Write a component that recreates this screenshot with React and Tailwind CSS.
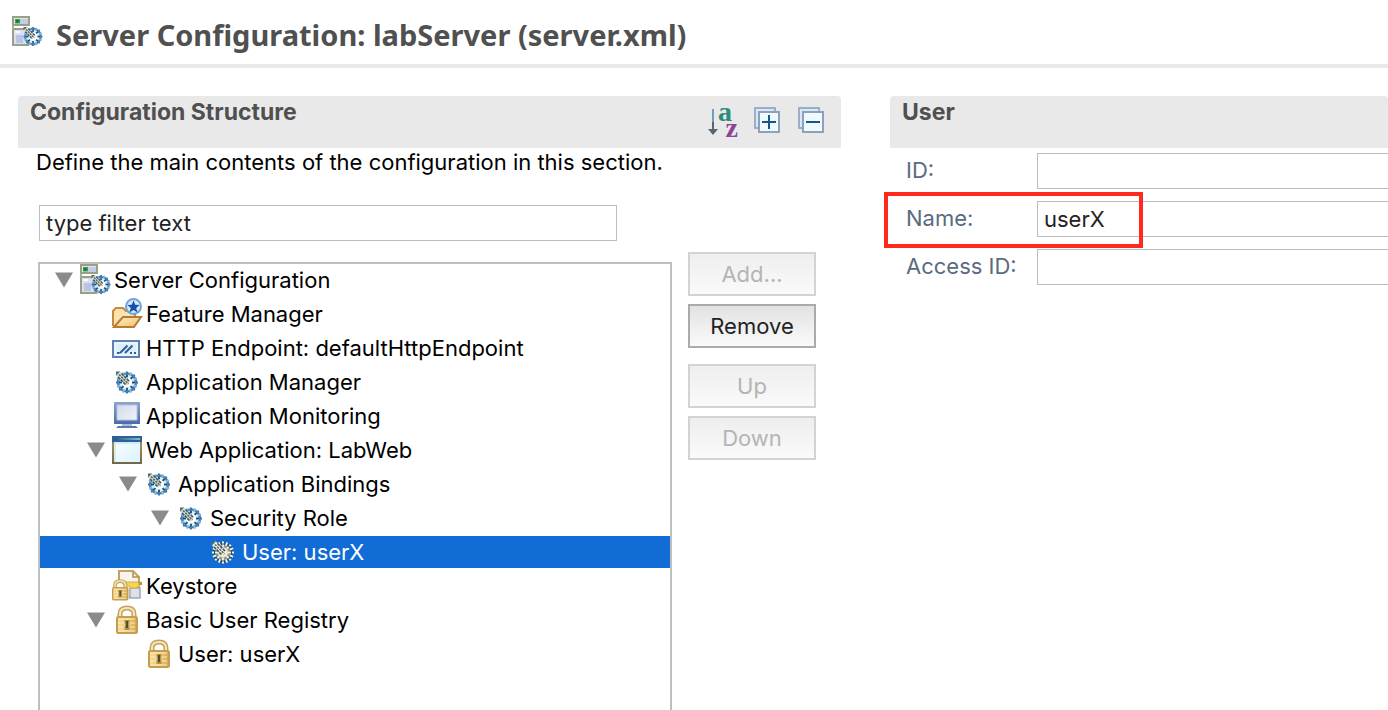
import React from "react";

const SPOKES = [0, 45, 90, 135, 180, 225, 270, 315];

function Gear({ cx, cy, r, light = false }) {
  return (
    <g transform={`translate(${cx} ${cy}) scale(${r / 11})`}>
      <circle r="9.500" fill={light ? "#8d99a0" : "#d9edf6"} />
      <circle
        r="9"
        fill="none"
        stroke={light ? "#2b4f73" : "#4a85b8"}
        strokeWidth="2.600"
      />
      {SPOKES.map((a) => (
        <g key={a} transform={`rotate(${a + 22.5})`}>
          <path d="M0 -11v3.500" stroke={light ? "#fbf8dc" : "#8fbbd9"} strokeWidth="1.800" />
        </g>
      ))}
      {SPOKES.map((a) => (
        <g key={a} transform={`rotate(${a})`}>
          <path d="M0 -11v2" stroke={light ? "#fbf8dc" : "#3f78ad"} strokeWidth="2" />
          <path d="M0 -8v3" stroke={light ? "#f3efd2" : "#1b4870"} strokeWidth="1.800" />
        </g>
      ))}
      <circle r="5" fill={light ? "#efecd4" : "#fbfdfb"} />
      <path d="M-9.500 -9.500L1 1" stroke={light ? "#f6f2d6" : "#d3dac6"} strokeWidth="5.500" />
      <path d="M-9 -5.500L-1 2.500M-5.500 -9L2.500 -1" stroke="#35567a" strokeWidth="1.600" strokeDasharray="3 .8" />
      <path d="M-8 -8L1.500 1.500" stroke="#5f6a58" strokeWidth="1.600" strokeDasharray="2.200 1" />
      <path d="M-11 -11h4l-4 4z" fill="#4f6a80" />
    </g>
  );
}

function Icon({ children, viewBox = "0 0 32 32" }) {
  return (
    <svg viewBox={viewBox} className="h-8 w-8 shrink-0" fill="none" aria-hidden="true">
      {children}
    </svg>
  );
}

function ServerIcon() {
  return (
    <Icon viewBox="1 0 32 32">
      <rect x="2" y="1" width="16" height="8" fill="#e2e5f3" stroke="#9aa084" strokeWidth="2" />
      <path d="M9 3h8v5H9z" fill="#c4cbe5" />
      <path d="M4 3h5v4.500H4z" fill="#35a24c" />
      <path d="M5 4h2.500v2.500H5z" fill="#0d7d2b" />
      <rect x="2" y="13" width="15" height="16" fill="#dadff3" stroke="#9aa084" strokeWidth="2" />
      <path d="M1 9.500h2v4H1z" fill="#a9ae98" />
      <path d="M4 15h5v2H4z" fill="#f8f9ff" />
      <path d="M5 19h7v8H5z" fill="#bac3e3" />
      <Gear cx={22} cy={20.500} r={9.500} />
    </Icon>
  );
}

function GearIcon({ light }) {
  return (
    <Icon>
      <Gear cx={15} cy={16.500} r={11} light={light} />
    </Icon>
  );
}

function FeatureIcon() {
  return (
    <Icon>
      <defs>
        <linearGradient id="folder" x1="0" y1="0" x2="1" y2="1">
          <stop offset="0" stopColor="#fff3cf" />
          <stop offset="1" stopColor="#f2bd63" />
        </linearGradient>
      </defs>
      <path d="M1 28V13l3-3h7l3 3h9v8" fill="#fbe3b0" stroke="#c78a3c" strokeWidth="2" />
      <path d="M2 29l9-10h18l-7 10z" fill="url(#folder)" stroke="#b87a35" strokeWidth="2" />
      <circle cx="21.500" cy="8.500" r="7.500" fill="#d6ebfa" stroke="#6fa5d8" strokeWidth="2" />
      <path d="M21.500 2.500l1.700 4.300 4.500.2-3.500 2.900 1.300 4.600-4-2.600-4 2.600 1.300-4.600-3.500-2.900 4.500-.2z" fill="#154fae" />
    </Icon>
  );
}

function EndpointIcon() {
  return (
    <Icon>
      <rect x="1" y="9" width="26" height="16" fill="#dcf0fb" stroke="#5e80b5" strokeWidth="2" />
      <path d="M3 11h22v12H3z" stroke="#f3fbff" strokeWidth="1" />
      <path d="M5 21h2.500M8 21l7.500-7.500M13 21l7.500-7.500" stroke="#335f94" strokeWidth="2" />
      <path d="M18 20h2v2h-2zM22 20h2v2h-2z" fill="#335f94" />
    </Icon>
  );
}

function MonitorIcon() {
  return (
    <Icon>
      <defs>
        <linearGradient id="screen" x1="0" y1="0" x2="1" y2="1">
          <stop offset="0" stopColor="#d3dae9" />
          <stop offset="1" stopColor="#f1f3f8" />
        </linearGradient>
        <linearGradient id="bezel" x1="0" y1="0" x2="0" y2="1">
          <stop offset="0" stopColor="#8da3cf" />
          <stop offset="1" stopColor="#4a6bab" />
        </linearGradient>
      </defs>
      <path d="M2 2h26v22H2z" fill="url(#bezel)" />
      <path d="M5 5h20v15H5z" fill="url(#screen)" stroke="#b8c5df" />
      <path d="M10 24h10v2H10z" fill="#a9b9d8" />
      <path d="M6 26h18l2 2H4z" fill="#5a78b2" />
    </Icon>
  );
}

function WindowIcon() {
  return (
    <Icon>
      <defs>
        <linearGradient id="frame" x1="0" y1="0" x2="0" y2="1">
          <stop offset="0" stopColor="#316699" />
          <stop offset="0.3" stopColor="#a58e55" />
          <stop offset="1" stopColor="#75674a" />
        </linearGradient>
        <linearGradient id="pane" x1="0" y1="0" x2="1" y2="1">
          <stop offset="0" stopColor="#ffffff" />
          <stop offset="1" stopColor="#d7f2fd" />
        </linearGradient>
        <linearGradient id="bar">
          <stop offset="0" stopColor="#25588b" />
          <stop offset="1" stopColor="#88b6db" />
        </linearGradient>
      </defs>
      <rect x="1" y="3" width="28" height="26" fill="url(#pane)" stroke="url(#frame)" strokeWidth="2" />
      <path d="M0 2h30v6H0z" fill="#2d6295" />
      <path d="M2 4h26v2H2z" fill="url(#bar)" />
      <path d="M3 28V9h24" stroke="#cceefa" strokeWidth="2" />
    </Icon>
  );
}

function LockShape() {
  return (
    <g>
      <path d="M8 15V10q0-6 7-6t7 6v5" stroke="#c6a25c" strokeWidth="5" />
      <path d="M8 15V10q0-6 7-6t7 6v5" stroke="#f5e6b4" strokeWidth="2" />
      <rect x="5" y="13" width="20" height="16" rx="1.500" fill="url(#brass)" stroke="#c79d4c" strokeWidth="2" />
      <path d="M6 15h17M6 19h17M6 23h17M6 27h17" stroke="#f9edc0" strokeWidth="1" />
      <path d="M12.500 16h5v3l-1 2 1 1v4h-5v-4l1-1-1-2z" fill="#b08f4c" />
      <path d="M14 17h2v7h-2z" fill="#5b4a2a" />
    </g>
  );
}

function Brass() {
  return (
    <defs>
      <linearGradient id="brass">
        <stop offset="0" stopColor="#f3dc97" />
        <stop offset="0.5" stopColor="#ecce80" />
        <stop offset="1" stopColor="#d3a750" />
      </linearGradient>
    </defs>
  );
}

function LockIcon() {
  return (
    <Icon>
      <Brass />
      <LockShape />
    </Icon>
  );
}

function KeystoreIcon() {
  return (
    <Icon>
      <Brass />
      <path d="M7 12V1h14l6 6v20H17" fill="#f6f4f0" stroke="#c6a260" strokeWidth="2" />
      <path d="M21 2v5h6" stroke="#b58d47" strokeWidth="1.500" />
      <path d="M18 18h10v10H18z" fill="#dce0e9" stroke="#a0a8b6" strokeWidth="1.500" />
      <path d="M12 12h17l-2 4-3 2h-5l-2-2h-5z" fill="#f6d54c" stroke="#d8b045" strokeWidth="1" />
      <path d="M26 12h4v3h-3z" fill="#c39339" />
      <g transform="translate(-3 8) scale(.75)">
        <LockShape />
      </g>
    </Icon>
  );
}

const NODES = [
  { level: 0, open: true, icon: <ServerIcon />, label: "Server Configuration" },
  { level: 1, icon: <FeatureIcon />, label: "Feature Manager" },
  { level: 1, icon: <EndpointIcon />, label: "HTTP Endpoint: defaultHttpEndpoint" },
  { level: 1, icon: <GearIcon />, label: "Application Manager" },
  { level: 1, icon: <MonitorIcon />, label: "Application Monitoring" },
  { level: 1, open: true, icon: <WindowIcon />, label: "Web Application: LabWeb" },
  { level: 2, open: true, icon: <GearIcon />, label: "Application Bindings" },
  { level: 3, open: true, icon: <GearIcon />, label: "Security Role" },
  { level: 4, selected: true, icon: <GearIcon light />, label: "User: userX" },
  { level: 1, icon: <KeystoreIcon />, label: "Keystore" },
  { level: 1, open: true, icon: <LockIcon />, label: "Basic User Registry" },
  { level: 2, icon: <LockIcon />, label: "User: userX" },
];

const INDENT = ["pl-[15px]", "pl-[47px]", "pl-[79px]", "pl-[111px]", "pl-[143px]"];

function TreeRow({ level, open, selected, icon, label }) {
  return (
    <li
      role="treeitem"
      aria-level={level + 1}
      aria-expanded={open}
      aria-selected={Boolean(selected)}
      className={`flex h-8 shrink-0 items-center whitespace-nowrap ${INDENT[level]} ${selected ? "bg-[#116cd6] text-white" : ""}`}
    >
      <span className="mr-[7px] flex w-[18px] shrink-0">
        {open && (
          <svg viewBox="0 0 18 15" className="h-4 w-[18px]" aria-hidden="true">
            <path d="M0 0h18L9 15z" fill="#8b8b8b" />
          </svg>
        )}
      </span>
      {icon}
      <span className="ml-0.5">{label}</span>
    </li>
  );
}

function ActionButton({ children, disabled }) {
  return (
    <button
      type="button"
      disabled={disabled}
      className={`h-11 w-full border-2 bg-linear-to-b ${
        disabled
          ? "border-[#d3d3d3] from-[#eeeeee] to-[#fafafa] text-[#b4b4b4]"
          : "border-[#aaaaaa] from-[#e2e2e2] to-[#fafafa] text-[#222]"
      }`}
    >
      {children}
    </button>
  );
}

function SectionHeader({ title, children }) {
  return (
    <div className="flex h-[52px] items-start justify-between rounded-t bg-[#e9e9e9] pr-[17px] pl-3">
      <h2 className="pt-0.5 text-[23px] leading-7 font-bold whitespace-nowrap text-[#505050]">{title}</h2>
      {children}
    </div>
  );
}

function StackedSquares({ plus }) {
  return (
    <svg viewBox="0 0 26 26" className="h-[26px] w-[26px]" fill="none" aria-hidden="true">
      <rect x="1" y="1" width="20" height="20" fill="#d4ebf7" stroke="#9dadc4" strokeWidth="2" />
      <rect x="5" y="5" width="20" height="20" fill="#effaff" stroke="#8fa0bc" strokeWidth="2" />
      <path d={plus ? "M8 15h14M15 8v14" : "M8 15h14"} stroke="#185486" strokeWidth="2" />
    </svg>
  );
}

function Field({ id, label, value, highlighted }) {
  return (
    <div className="relative flex h-9 items-center">
      <label htmlFor={id} className="w-[131px] shrink-0 pb-0.5 text-[#5a6b80]">
        {label}
      </label>
      <input
        id={id}
        defaultValue={value}
        className="h-9 w-full min-w-0 border border-r-0 border-[#bdbdbd] bg-white px-1.5 text-[#222] outline-none"
      />
      {highlighted && (
        <div className="pointer-events-none absolute -top-[9px] -left-[22px] h-14 w-[259px] border-4 border-[#ff291c]" />
      )}
    </div>
  );
}

export default function App() {
  return (
    <div className="flex h-screen flex-col overflow-hidden bg-white font-['Inter','Liberation_Sans',sans-serif] text-[22px] leading-7 text-black">
      <header className="flex h-[68px] shrink-0 items-center gap-3 border-b-4 border-[#e9e9e9] pl-3">
        <ServerIcon />
        <h1 className="pt-1.5 font-['Noto_Sans','Open_Sans',sans-serif] text-[29px] leading-9 font-bold whitespace-nowrap text-[#505050]">
          Server Configuration: labServer (server.xml)
        </h1>
      </header>

      <main className="grid min-h-0 flex-1 grid-cols-[823fr_498fr] gap-x-[49px] pt-7 pl-[18px]">
        <section className="flex min-h-0 min-w-0 flex-col">
          <SectionHeader title="Configuration Structure">
            <div className="flex items-center gap-4 pt-2">
              <button
                type="button"
                aria-label="Sort alphabetically"
                className="flex h-8 w-[30px] font-['Liberation_Serif',serif] text-[28px] leading-4 font-bold"
              >
                <svg viewBox="0 0 10 32" className="h-8 w-2.5 shrink-0" fill="none" aria-hidden="true">
                  <path d="M5 5v13" stroke="#6f9dc4" strokeWidth="2" />
                  <path d="M5 18v8" stroke="#596470" strokeWidth="2" />
                  <path d="M0 25h10l-5 6z" fill="#596470" />
                </svg>
                <span className="flex w-5 flex-col">
                  <span className="self-start text-[#2f8a7d]">a</span>
                  <span className="self-end text-[#8e4394]">z</span>
                </span>
              </button>
              <div className="flex gap-[18px]">
                <button type="button" aria-label="Expand all">
                  <StackedSquares plus />
                </button>
                <button type="button" aria-label="Collapse all">
                  <StackedSquares />
                </button>
              </div>
            </div>
          </SectionHeader>

          <p className="pl-[18px] whitespace-nowrap">
            Define the main contents of the configuration in this section.
          </p>

          <div className="flex min-h-0 flex-1 gap-4 pt-[29px] pr-[25px] pl-5">
            <div className="flex min-w-0 flex-1 flex-col">
              <input
                aria-label="Filter"
                defaultValue="type filter text"
                className="mr-[55px] ml-px h-9 shrink-0 border border-[#bdbdbd] bg-white px-1.5 text-[#222] outline-none"
              />
              <ul
                role="tree"
                aria-label="Configuration Structure"
                className="mt-[21px] flex min-h-0 flex-1 flex-col gap-0.5 overflow-hidden border-x-2 border-t-2 border-[#bfbfbf]"
              >
                {NODES.map((node, i) => (
                  <TreeRow key={i} {...node} />
                ))}
              </ul>
            </div>
            <div className="flex w-32 shrink-0 flex-col gap-2 pt-[47px]">
              <ActionButton disabled>Add...</ActionButton>
              <ActionButton>Remove</ActionButton>
              <div className="flex flex-col gap-2 pt-2">
                <ActionButton disabled>Up</ActionButton>
                <ActionButton disabled>Down</ActionButton>
              </div>
            </div>
          </div>
        </section>

        <section className="min-w-0">
          <SectionHeader title="User" />
          <div className="flex flex-col gap-3 pt-[5px] pl-4">
            <Field id="user-id" label="ID:" />
            <Field id="user-name" label="Name:" value="userX" highlighted />
            <Field id="access-id" label="Access ID:" />
          </div>
        </section>
      </main>
    </div>
  );
}
